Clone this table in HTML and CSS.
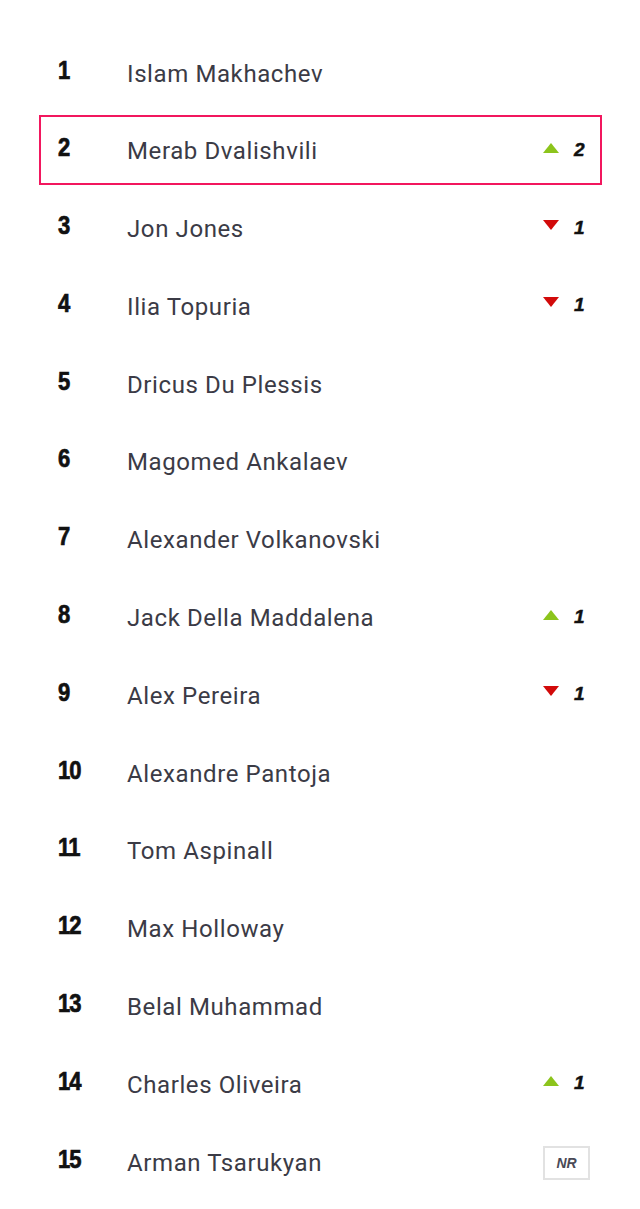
FILE: index.html
```html
<!DOCTYPE html>
<html lang="en">
<head>
<meta charset="utf-8">
<title>Rankings</title>
<link rel="stylesheet" href="styles.css">
</head>
<body>
<ol class="rank-list">
  <li class="row"><span class="num">1</span><span class="name">Islam Makhachev</span><span class="trend"></span></li>
  <li class="row row--active"><span class="num">2</span><span class="name">Merab Dvalishvili</span><span class="trend"><span class="arrow arrow--up"></span><span class="delta">2</span></span></li>
  <li class="row"><span class="num">3</span><span class="name">Jon Jones</span><span class="trend"><span class="arrow arrow--down"></span><span class="delta">1</span></span></li>
  <li class="row"><span class="num">4</span><span class="name">Ilia Topuria</span><span class="trend"><span class="arrow arrow--down"></span><span class="delta">1</span></span></li>
  <li class="row"><span class="num">5</span><span class="name">Dricus Du Plessis</span><span class="trend"></span></li>
  <li class="row"><span class="num">6</span><span class="name">Magomed Ankalaev</span><span class="trend"></span></li>
  <li class="row"><span class="num">7</span><span class="name">Alexander Volkanovski</span><span class="trend"></span></li>
  <li class="row"><span class="num">8</span><span class="name">Jack Della Maddalena</span><span class="trend"><span class="arrow arrow--up"></span><span class="delta">1</span></span></li>
  <li class="row"><span class="num">9</span><span class="name">Alex Pereira</span><span class="trend"><span class="arrow arrow--down"></span><span class="delta">1</span></span></li>
  <li class="row"><span class="num">10</span><span class="name">Alexandre Pantoja</span><span class="trend"></span></li>
  <li class="row"><span class="num">11</span><span class="name">Tom Aspinall</span><span class="trend"></span></li>
  <li class="row"><span class="num">12</span><span class="name">Max Holloway</span><span class="trend"></span></li>
  <li class="row"><span class="num">13</span><span class="name">Belal Muhammad</span><span class="trend"></span></li>
  <li class="row"><span class="num">14</span><span class="name">Charles Oliveira</span><span class="trend"><span class="arrow arrow--up"></span><span class="delta">1</span></span></li>
  <li class="row"><span class="num">15</span><span class="name">Arman Tsarukyan</span><span class="trend"><span class="nr">NR</span></span></li>
</ol>
</body>
</html>
```
FILE: styles.css
```css
html, body {
  margin: 0;
  padding: 0;
  background: #ffffff;
}

.rank-list {
  list-style: none;
  margin: 0;
  padding: 37px 0 0 39px;
  width: 563px;
  display: flex;
  flex-direction: column;
  gap: 7.8px;
}

.row {
  box-sizing: border-box;
  height: 70px;
  border: 2px solid transparent;
  padding: 0 10px 0 17px;
  display: grid;
  grid-template-columns: 69px 1fr 47px;
  align-items: center;
}

.row--active {
  border-color: #f2175e;
}

.num {
  font-family: "Liberation Sans Narrow", "Liberation Sans", Arial, sans-serif;
  font-weight: 700;
  font-size: 25px;
  color: #111111;
  letter-spacing: -1px;
  -webkit-text-stroke: 0.7px #111111;
  transform: scaleX(0.88);
  transform-origin: left center;
  margin-top: -4px;
}

.name {
  font-family: "Roboto", "Liberation Sans", Arial, sans-serif;
  font-size: 24px;
  color: #3b3b46;
  letter-spacing: 0.6px;
  margin-top: 3px;
}

.trend {
  display: flex;
  align-items: center;
  height: 100%;
}

.arrow {
  width: 0;
  height: 0;
  border-left: 8px solid transparent;
  border-right: 8px solid transparent;
  margin-right: 15px;
}

.arrow--up {
  border-bottom: 10px solid #8cc41c;
  margin-top: -4px;
}

.arrow--down {
  border-top: 10px solid #d20a0a;
  margin-top: -6px;
}

.delta {
  font-family: "Liberation Sans", Arial, sans-serif;
  font-weight: 700;
  font-style: italic;
  font-size: 19px;
  color: #111111;
  -webkit-text-stroke: 0.5px #111111;
}

.nr {
  box-sizing: border-box;
  width: 47px;
  height: 34px;
  border: 2px solid #e2e2e2;
  display: flex;
  align-items: center;
  justify-content: center;
  font-family: "Liberation Sans Narrow", "Liberation Sans", Arial, sans-serif;
  font-weight: 700;
  font-style: italic;
  font-size: 14px;
  color: #4a4a56;
  margin-top: 4px;
}
```
